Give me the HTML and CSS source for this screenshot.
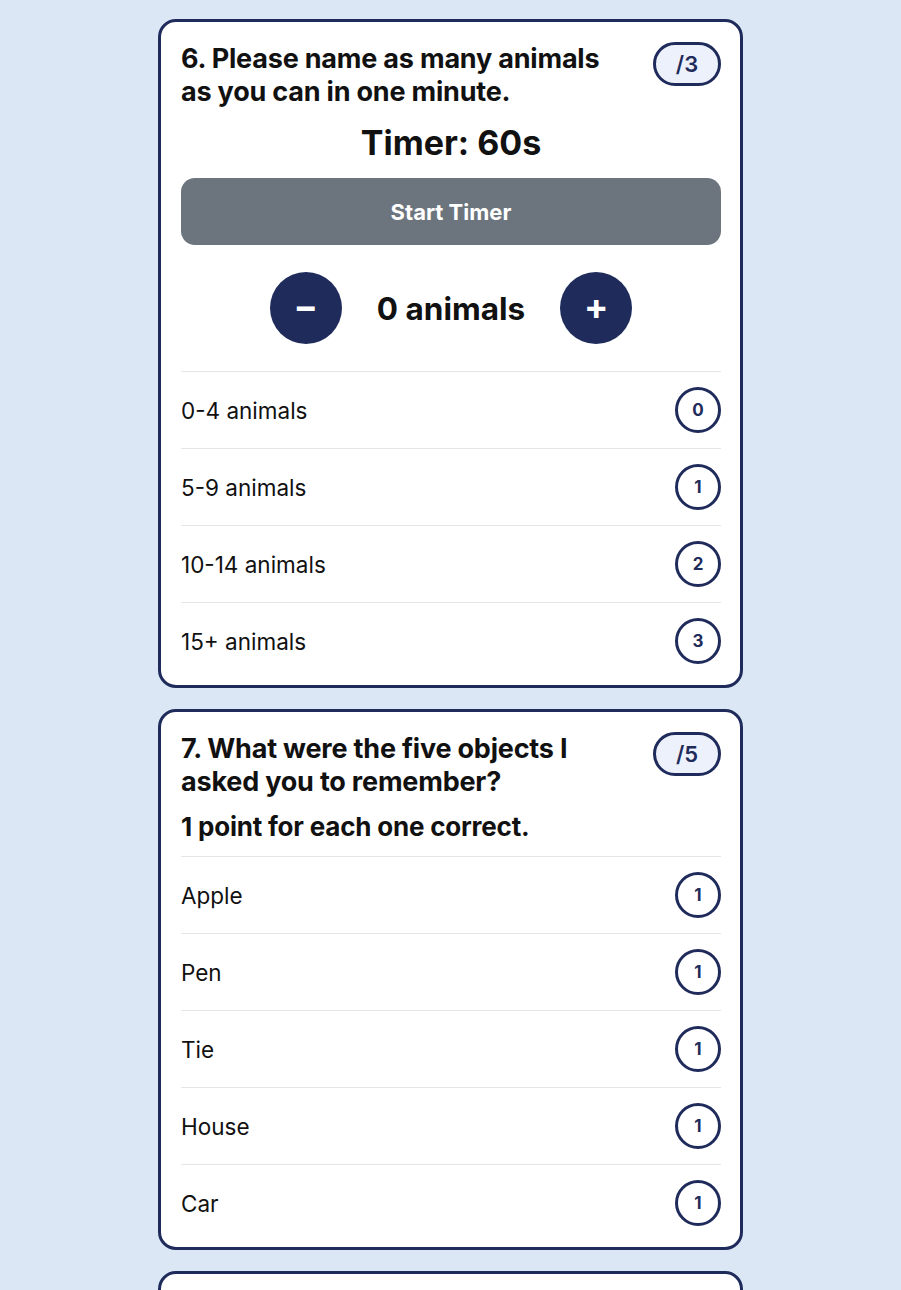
FILE: index.html
```html
<!DOCTYPE html>
<html lang="en">

<head>
    <meta charset="UTF-8">
    <meta name="viewport" content="width=device-width, initial-scale=1.0">
    <title>Cognitive Assessment</title>
    <link rel="stylesheet" href="styles.css">
</head>

<body>
    <div class="questions">
        <div class="card">
            <div class="card-header">
                <h2 class="question">6. Please name as many animals as you can in one minute.</h2>
                <span class="score-badge">/3</span>
            </div>

            <div class="timer">Timer: 60s</div>
            <button class="timer-btn">Start Timer</button>

            <div class="counter">
                <button class="round-btn">&minus;</button>
                <span class="count">0 animals</span>
                <button class="round-btn">+</button>
            </div>

            <div class="options">
                <div class="option"><span>0-4 animals</span><span class="points">0</span></div>
                <div class="option"><span>5-9 animals</span><span class="points">1</span></div>
                <div class="option"><span>10-14 animals</span><span class="points">2</span></div>
                <div class="option"><span>15+ animals</span><span class="points">3</span></div>
            </div>
        </div>

        <div class="card">
            <div class="card-header">
                <h2 class="question">7. What were the five objects I asked you to remember?</h2>
                <span class="score-badge">/5</span>
            </div>

            <p class="hint">1 point for each one correct.</p>

            <div class="options">
                <div class="option"><span>Apple</span><span class="points">1</span></div>
                <div class="option"><span>Pen</span><span class="points">1</span></div>
                <div class="option"><span>Tie</span><span class="points">1</span></div>
                <div class="option"><span>House</span><span class="points">1</span></div>
                <div class="option"><span>Car</span><span class="points">1</span></div>
            </div>
        </div>

        <!-- next question card, scrolled below -->
        <div class="card card-next"></div>
    </div>
</body>

</html>
```

FILE: styles.css
```css
body {
    margin: 0;
    background-color: #dbe7f4;
    font-family: Inter, "Noto Sans", Arial, sans-serif;
    color: #111;
}

.questions {
    width: 585px;
    margin: 0 auto;
    padding-top: 19px;
    display: flex;
    flex-direction: column;
    gap: 21px;
}

.card {
    background-color: white;
    border: 3px solid #1f2b5b;
    border-radius: 18px;
    padding: 20px 19px 6px 20px;
}

.card-next {
    height: 120px;
}

.card-header {
    display: flex;
    justify-content: space-between;
    align-items: flex-start;
    gap: 20px;
}

.question {
    margin: 0;
    font-size: 27px;
    line-height: 33px;
    font-weight: 700;
    letter-spacing: -0.2px;
    max-width: 450px;
}

.score-badge {
    flex-shrink: 0;
    width: 62px;
    height: 38px;
    border: 3px solid #1f2b5b;
    border-radius: 22px;
    background-color: #edf1fb;
    color: #1f2b5b;
    font-size: 22px;
    font-weight: 600;
    display: flex;
    align-items: center;
    justify-content: center;
}

.timer {
    text-align: center;
    font-size: 34px;
    font-weight: 700;
    line-height: 44px;
    margin-top: 13px;
}

.timer-btn {
    display: block;
    width: 100%;
    height: 67px;
    margin-top: 13px;
    border: none;
    border-radius: 14px;
    background-color: #6c757d;
    color: white;
    font-family: inherit;
    font-size: 22px;
    font-weight: 700;
}

.counter {
    display: flex;
    justify-content: center;
    align-items: center;
    gap: 35px;
    margin: 27px 0 27px;
}

.round-btn {
    width: 72px;
    height: 72px;
    border: none;
    border-radius: 50%;
    background-color: #1f2b5b;
    color: white;
    font-family: inherit;
    font-size: 36px;
    font-weight: 700;
    line-height: 1;
    padding: 0 0 4px 0;
}

.count {
    font-size: 31.5px;
    font-weight: 700;
}

.hint {
    margin: 14px 0 14px;
    font-size: 26px;
    line-height: 30px;
    font-weight: 700;
    letter-spacing: -0.2px;
}

.options {
    border-top: 1px solid #e6e6e6;
}

.option {
    display: flex;
    justify-content: space-between;
    align-items: center;
    height: 76px;
    border-bottom: 1px solid #e6e6e6;
    font-size: 22.5px;
}

.option:last-child {
    border-bottom: none;
}

.points {
    width: 40px;
    height: 40px;
    border: 3px solid #1f2b5b;
    border-radius: 50%;
    color: #1f2b5b;
    font-size: 17px;
    font-weight: 700;
    display: flex;
    align-items: center;
    justify-content: center;
}
```
